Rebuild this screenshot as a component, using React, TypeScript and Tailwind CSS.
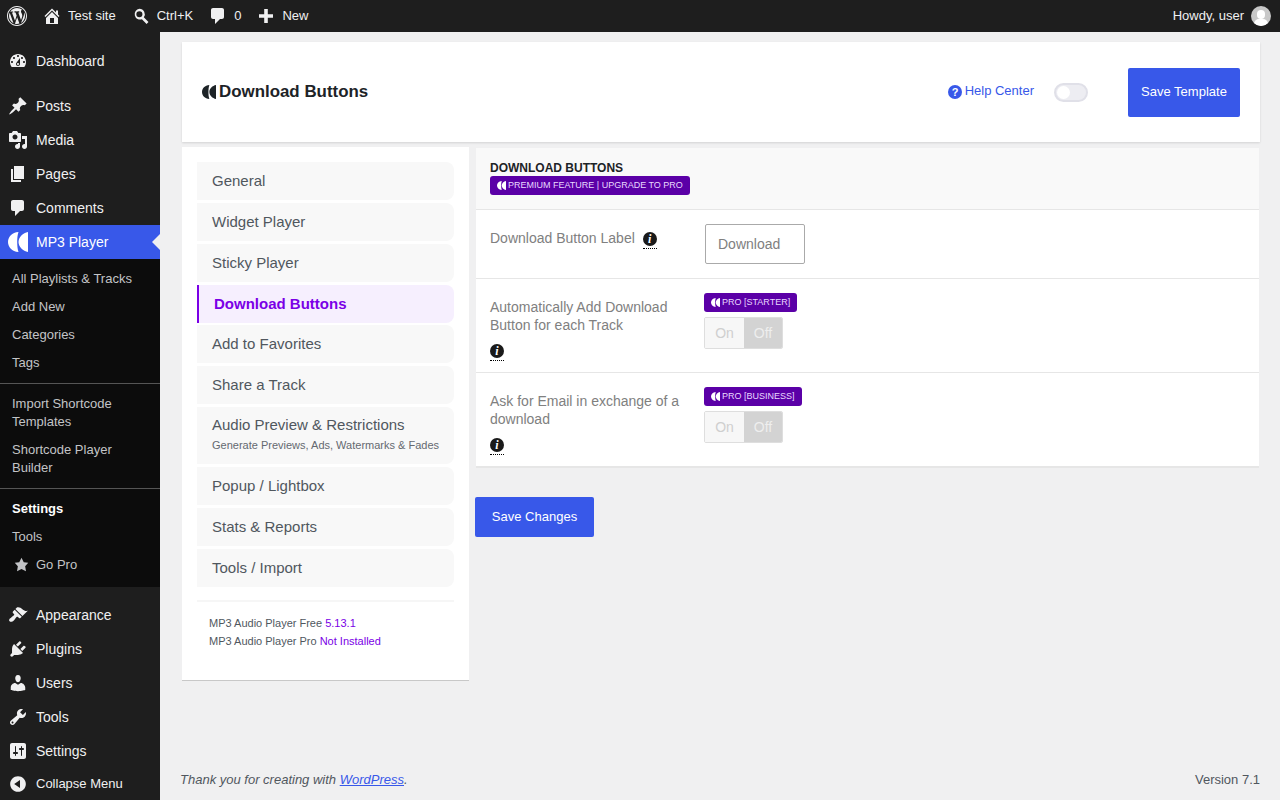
/**
 * MP3 Player settings page inside WP admin
 */
import React from 'react';

const ICONS: Record<string, string> = {
  dashboard:
    'M3.76 16h12.48c1.1-1.37 1.76-3.11 1.76-5 0-4.42-3.58-8-8-8s-8 3.58-8 8c0 1.89.66 3.63 1.76 5zM10 4c.55 0 1 .45 1 1s-.45 1-1 1-1-.45-1-1 .45-1 1-1zM6 6c.55 0 1 .45 1 1s-.45 1-1 1-1-.45-1-1 .45-1 1-1zm8 0c.55 0 1 .45 1 1s-.45 1-1 1-1-.45-1-1 .45-1 1-1zm-5.37 5.55L12 7v6c0 1.1-.9 2-2 2s-2-.9-2-2c0-.57.24-1.08.63-1.45zM4 10c.55 0 1 .45 1 1s-.45 1-1 1-1-.45-1-1 .45-1 1-1zm12 0c.55 0 1 .45 1 1s-.45 1-1 1-1-.45-1-1 .45-1 1-1zm-5 3c0-.55-.45-1-1-1s-1 .45-1 1 .45 1 1 1 1-.45 1-1z',
  posts:
    'M10.44 3.02l1.82-1.82 6.36 6.35-1.83 1.82c-1.05-.68-2.48-.57-3.41.36l-.75.75c-.92.93-1.04 2.35-.35 3.41l-1.83 1.82-2.41-2.41-2.8 2.79c-.42.42-3.38 2.71-3.8 2.29s1.86-3.39 2.28-3.81l2.79-2.79L4.1 9.36l1.83-1.82c1.05.69 2.48.57 3.4-.36l.75-.75c.93-.92 1.05-2.35.36-3.41z',
  media:
    'M13 11V4c0-.55-.45-1-1-1h-1.67L9 1H5L3.67 3H2c-.55 0-1 .45-1 1v7c0 .55.45 1 1 1h10c.55 0 1-.45 1-1zM7 4.5c1.38 0 2.5 1.12 2.5 2.5S8.38 9.5 7 9.5 4.5 8.38 4.5 7 5.62 4.5 7 4.5zM14 6h5v10.5c0 1.38-1.12 2.5-2.5 2.5S14 17.88 14 16.5s1.12-2.5 2.5-2.5c.17 0 .34.02.5.05V9h-3V6zm-4 8.05V13h2v3.5c0 1.38-1.12 2.5-2.5 2.5S7 17.88 7 16.5 8.12 14 9.5 14c.17 0 .34.02.5.05z',
  pages: 'M6 15V2h10v13H6zm-1 1h8v2H3V5h2v11z',
  comments: 'M5 2h9c1.1 0 2 .9 2 2v7c0 1.1-.9 2-2 2h-2l-5 5v-5H5c-1.1 0-2-.9-2-2V4c0-1.1.9-2 2-2z',
  appearance:
    'M14.48 11.06L7.41 3.99l1.5-1.5c.5-.56 2.3-.47 3.51.32 1.21.8 1.43 1.28 2.91 2.1 1.18.64 2.45 1.26 4.45.85zm-.71.71L6.7 4.7 4.93 6.47c-.39.39-.39 1.02 0 1.41l1.06 1.06c.39.39.39 1.03 0 1.42-.6.6-1.43 1.11-2.21 1.69-.35.26-.7.53-1.01.84C1.43 13.23.4 15.11 1.6 16.31c1.2 1.2 3.08.17 4.42-1.17.31-.31.58-.66.84-1.01.58-.78 1.09-1.61 1.69-2.21.39-.39 1.03-.39 1.42 0l1.06 1.06c.39.39 1.02.39 1.41 0z',
  plugins:
    'M13.11 4.36L9.87 7.6 8 5.73l3.24-3.24c.35-.34 1.05-.2 1.56.32.52.51.66 1.21.31 1.55zm-8 1.77l.91-1.12 9.01 9.01-1.19.84c-.71.71-2.63 1.16-3.82 1.16H6.14L4.9 17.26c-.59.59-1.54.59-2.12 0-.59-.58-.59-1.53 0-2.12l1.24-1.24v-3.88c0-1.13.4-3.19 1.09-3.89zm7.26 3.97l3.24-3.24c.34-.35 1.04-.21 1.55.31.52.51.66 1.21.31 1.55l-3.24 3.25z',
  users:
    'M10 9.25c-2.27 0-2.73-3.44-2.73-3.44C7 4.02 7.82 2 9.97 2c2.16 0 2.98 2.02 2.71 3.81 0 0-.41 3.44-2.68 3.44zm0 2.57L12.72 10c2.39 0 4.52 2.33 4.52 4.53v2.49s-3.65 1.13-7.24 1.13c-3.65 0-7.24-1.13-7.24-1.13v-2.49c0-2.25 1.94-4.48 4.47-4.48z',
  tools:
    'M16.68 9.77c-1.34 1.34-3.3 1.67-4.95.99l-5.41 6.52c-.99.99-2.59.99-3.58 0s-.99-2.59 0-3.57l6.52-5.42c-.68-1.65-.35-3.61.99-4.95 1.28-1.28 3.12-1.62 4.72-1.06l-2.89 2.89 2.82 2.82 2.86-2.87c.53 1.58.18 3.39-1.08 4.65zM3.81 16.21c.4.39 1.04.39 1.43 0 .4-.4.4-1.04 0-1.43-.39-.4-1.03-.4-1.43 0-.39.39-.39 1.03 0 1.43z',
  settings:
    'M18 16V4c0-1.1-.9-2-2-2H4c-1.1 0-2 .9-2 2v12c0 1.1.9 2 2 2h12c1.1 0 2-.9 2-2zM8 11h1c.55 0 1 .45 1 1s-.45 1-1 1H8v1.5c0 .28-.22.5-.5.5s-.5-.22-.5-.5V13H6c-.55 0-1-.45-1-1s.45-1 1-1h1V5.5c0-.28.22-.5.5-.5s.5.22.5.5V11zm5-2h-1c-.55 0-1-.45-1-1s.45-1 1-1h1V5.5c0-.28.22-.5.5-.5s.5.22.5.5V7h1c.55 0 1 .45 1 1s-.45 1-1 1h-1v5.5c0 .28-.22.5-.5.5s-.5-.22-.5-.5V9z',
  collapse: 'M10 2.16c4.33 0 7.84 3.51 7.84 7.84s-3.51 7.84-7.84 7.84S2.16 14.33 2.16 10 5.71 2.16 10 2.16zm2 11.72V6.12L6.18 9.97z',
  home: 'M16 8.5l1.53 1.53-1.06 1.06L10 4.62l-6.47 6.47-1.06-1.06L10 2.5l4 4v-2h2v4zm-6-2.46l6 5.99V18H4v-5.97zM12 17v-5H8v5h4z',
  star: 'M10 1l3 6 6 .75-4.12 4.62L16 19l-6-3-6 3 1.13-6.63L1 7.75 7 7z',
  wp: 'M20 10c0-5.52-4.48-10-10-10S0 4.48 0 10s4.48 10 10 10 10-4.48 10-10zM10 1.01c4.97 0 8.99 4.02 8.99 8.99s-4.02 8.99-8.99 8.99S1.01 14.97 1.01 10 5.03 1.01 10 1.01zM8.01 14.82L4.96 6.61c.49-.03 1.05-.08 1.05-.08.43-.05.38-1.01-.06-.99 0 0-1.29.1-2.13.1-.15 0-.33 0-.52-.01 1.44-2.17 3.9-3.6 6.7-3.6 2.09 0 3.99.79 5.41 2.09-.6-.08-1.45.35-1.45 1.42 0 .66.38 1.22.79 1.88.31.54.5 1.22.5 2.21 0 1.34-1.27 4.48-1.27 4.48l-2.71-7.5c.48-.03.75-.16.75-.16.43-.05.38-1.1-.05-1.08 0 0-1.3.11-2.14.11-.78 0-2.11-.11-2.11-.11-.43-.02-.48 1.06-.05 1.08l.84.08 1.12 3.04zm6.02 2.15L16.64 10s.67-1.69.39-3.81c.63 1.14.94 2.42.94 3.81 0 2.96-1.56 5.58-3.94 6.97zM2.68 6.77L6.5 17.25c-2.67-1.3-4.47-4.08-4.47-7.25 0-1.16.2-2.23.65-3.23zm7.45 4.53l2.29 6.25c-.75.27-1.57.42-2.42.42-.72 0-1.41-.11-2.06-.3z',
  search: 'M8.2 2a6 6 0 0 1 4.9 9.5l5.2 5.2-2.1 2.1-5.2-5.2A6 6 0 1 1 8.2 2zm0 2.6a3.4 3.4 0 1 0 0 6.8 3.4 3.4 0 0 0 0-6.8z',
  plus: 'M8.2 3h3.6v5.2H17v3.6h-5.2V17H8.2v-5.2H3V8.2h5.2z',
  logo: 'M10.500 0C4 .5 0 5 0 10s4 9.500 10.500 10C9.500 17 9.200 13.500 9.200 10s.3-7 1.300-10zM20 0c-5 1-9.500 5-9.500 10S15 19 20 20z',
};

const Dashicon = ({ name, className }: { name: string; className: string }) => (
  <svg viewBox="0 0 20 20" className={className} fill="currentColor" aria-hidden="true">
    <path d={ICONS[name]} fillRule={name === 'wp' || name === 'search' ? 'evenodd' : 'nonzero'} />
  </svg>
);

const MenuItem = ({ icon, label }: { icon: string; label: string }) => (
  <div className="flex h-[34px] shrink-0 items-center text-[14px] text-[#f0f0f1]">
    <Dashicon name={icon} className="ml-2 h-5 w-5 text-[#f0f0f1]" />
    <span className="ml-2">{label}</span>
  </div>
);

const SubItem = ({ children, bold }: { children: React.ReactNode; bold?: boolean }) => (
  <div className={`px-3 pb-1 pt-[6px] text-[13px] leading-[18px] ${bold ? 'font-bold text-white' : 'text-[#c3c4c7]'}`}>
    {children}
  </div>
);

const Sidebar = () => (
  <aside className="flex h-[768px] w-40 shrink-0 flex-col bg-[#1e1e1e] pt-3">
    <MenuItem icon="dashboard" label="Dashboard" />
    <div className="h-[11px] shrink-0" />
    <MenuItem icon="posts" label="Posts" />
    <MenuItem icon="media" label="Media" />
    <MenuItem icon="pages" label="Pages" />
    <MenuItem icon="comments" label="Comments" />

    {/* current menu */}
    <div className="relative flex h-[34px] shrink-0 items-center bg-[#3858e9] text-[14px] text-white">
      <Dashicon name="logo" className="ml-2 h-5 w-5" />
      <span className="ml-2">MP3 Player</span>
      <span className="absolute right-0 top-[9px] h-0 w-0 border-y-8 border-r-8 border-y-transparent border-r-[#f0f0f1]" />
    </div>
    <div className="shrink-0 bg-[#0c0c0c] pb-[9px] pt-[5px]">
      <SubItem>All Playlists &amp; Tracks</SubItem>
      <SubItem>Add New</SubItem>
      <SubItem>Categories</SubItem>
      <SubItem>Tags</SubItem>
      <div className="mb-[5px] mt-[7px] h-px bg-[#555]" />
      <SubItem>Import Shortcode Templates</SubItem>
      <SubItem>Shortcode Player Builder</SubItem>
      <div className="mb-[5px] mt-[7px] h-px bg-[#555]" />
      <SubItem bold>Settings</SubItem>
      <SubItem>Tools</SubItem>
      <div className="flex items-center pb-1 pl-[14px] pt-[6px] text-[13px] leading-[18px] text-[#c3c4c7]">
        <Dashicon name="star" className="-mt-[2px] h-[15px] w-[15px] text-[#c3c4c7]" />
        <span className="ml-[7px]">Go Pro</span>
      </div>
    </div>

    <div className="h-[11px] shrink-0" />
    <MenuItem icon="appearance" label="Appearance" />
    <MenuItem icon="plugins" label="Plugins" />
    <MenuItem icon="users" label="Users" />
    <MenuItem icon="tools" label="Tools" />
    <MenuItem icon="settings" label="Settings" />
    <div className="flex h-8 shrink-0 items-center text-[13px] text-[#f0f0f1]">
      <Dashicon name="collapse" className="ml-2 h-5 w-5" />
      <span className="ml-2">Collapse Menu</span>
    </div>
  </aside>
);

const AdminBar = () => (
  <header className="flex h-8 items-center bg-[#1e1e1e] text-[13px] text-[#f0f0f1]">
    <Dashicon name="wp" className="ml-[7px] h-5 w-5" />
    <Dashicon name="home" className="ml-[15px] h-5 w-5" />
    <span className="ml-[6px]">Test site</span>
    <Dashicon name="search" className="ml-[16px] h-[18px] w-[18px]" />
    <span className="ml-[7px]">Ctrl+K</span>
    <Dashicon name="comments" className="ml-[15px] h-5 w-5" />
    <span className="ml-[6px]">0</span>
    <Dashicon name="plus" className="ml-[15px] h-5 w-5" />
    <span className="ml-[6px]">New</span>
    <span className="ml-auto">Howdy, user</span>
    <span className="relative ml-[7px] mr-[9px] h-5 w-5 overflow-hidden rounded-full bg-[#c8c8c8]">
      <span className="absolute left-[6px] top-[4px] h-[9px] w-2 rounded-full bg-white" />
      <span className="absolute left-[3px] top-[13px] h-[10px] w-[14px] rounded-full bg-white" />
    </span>
  </header>
);

const NAV = ['General', 'Widget Player', 'Sticky Player', 'Download Buttons', 'Add to Favorites', 'Share a Track'];
const NAV_AFTER = ['Popup / Lightbox', 'Stats & Reports', 'Tools / Import'];

const NavItem = ({ label }: { label: string }) =>
  label === 'Download Buttons' ? (
    <div className="-mb-px flex h-[38px] items-center rounded-r-lg border-l-2 border-[#7a00e6] bg-[#f6effe] pl-[15px] pt-px text-[15px] font-bold text-[#7a00e6]">
      {label}
    </div>
  ) : (
    <div className="flex h-[38px] items-center rounded-r-lg bg-[#f8f8f8] pl-[15px] text-[15px] text-[#50575e]">{label}</div>
  );

const SettingsNav = () => (
  <nav className="h-[534px] w-[287px] shrink-0 border-b border-[#c8c8c8] bg-white px-[15px] pt-[15px]">
    <div className="flex flex-col gap-[3px]">
      {NAV.map((label) => (
        <NavItem key={label} label={label} />
      ))}
      <div className="h-[57px] rounded-r-lg bg-[#f8f8f8] pl-[15px] pt-[9px] text-[#50575e]">
        <div className="text-[15px] leading-[18px]">Audio Preview &amp; Restrictions</div>
        <div className="mt-[3px] text-[11px] leading-[16px] text-[#646970]">Generate Previews, Ads, Watermarks &amp; Fades</div>
      </div>
      {NAV_AFTER.map((label) => (
        <NavItem key={label} label={label} />
      ))}
    </div>
    <div className="mt-[13px] h-[2px] bg-[#f6f6f6]" />
    <div className="pl-3 pt-3 text-[11px] leading-[18px] text-[#50575e]">
      <div>
        MP3 Audio Player Free <span className="text-[#7a00e6]">5.13.1</span>
      </div>
      <div>
        MP3 Audio Player Pro <span className="text-[#7a00e6]">Not Installed</span>
      </div>
    </div>
  </nav>
);

const ProBadge = ({ label }: { label: string }) => (
  <span className="flex h-[19px] w-fit items-center rounded-[3px] bg-[#5b00a7] px-[7px] text-[9px] text-[#e8d8ff]">
    <Dashicon name="logo" className="mr-[2px] h-[9px] w-[9px] text-white" />
    {label}
  </span>
);

const InfoTip = ({ className }: { className?: string }) => (
  <span className={`inline-block h-[17px] w-[14px] border-b border-dotted border-black ${className ?? ''}`}>
    <span className="flex h-[14px] w-[14px] items-center justify-center rounded-full bg-[#1a1a1a] font-['Liberation_Serif',serif] text-[12px] font-bold italic leading-none text-white">
      i
    </span>
  </span>
);

const OnOff = () => (
  <div className="mt-[5px] flex h-8 w-[79px] overflow-hidden rounded-[2px] border border-[#dedede] text-[14px]">
    <span className="flex w-[39px] items-center justify-center bg-[#f7f7f7] text-[#cfcfcf]">On</span>
    <span className="flex flex-1 items-center justify-center bg-[#d3d3d3] text-[#eeeeee]">Off</span>
  </div>
);

const ProRow = ({ label, badge }: { label: React.ReactNode; badge: string }) => (
  <div className="flex h-[94px] border-t border-[#e6e6e6] pl-[14px] pt-[14px]">
    <div className="w-[214px] pr-5 pt-[5px] text-[14px] leading-[18px] text-[#808080]">
      <div>{label}</div>
      <InfoTip className="mt-[10px] block" />
    </div>
    <div>
      <ProBadge label={badge} />
      <OnOff />
    </div>
  </div>
);

const DownloadPanel = () => (
  <div className="mt-px w-[783px] border-b-2 border-[#e6e6e6] bg-white">
    <div className="h-[61px] bg-[#f9f9f9] pl-[14px] pt-[13px]">
      <div className="text-[12px] font-bold leading-[15px] text-[#1d2327]">DOWNLOAD BUTTONS</div>
      <ProBadge label="PREMIUM FEATURE | UPGRADE TO PRO" />
    </div>
    <div className="flex h-[69px] border-t border-[#e6e6e6] pl-[14px] pt-[14px]">
      <div className="flex w-[215px] items-start pt-[5px] text-[14px] leading-[18px] text-[#808080]">
        Download Button Label
        <InfoTip className="ml-2 mt-[3px]" />
      </div>
      <div className="flex h-10 w-[100px] items-center rounded-[2px] border border-[#aaa] pl-3 text-[14px] text-[#808080]">Download</div>
    </div>
    <ProRow label="Automatically Add Download Button for each Track" badge="PRO [STARTER]" />
    <ProRow label="Ask for Email in exchange of a download" badge="PRO [BUSINESS]" />
  </div>
);

const PageHeader = () => (
  <div className="flex h-[100px] items-center bg-white pl-5 pr-5 shadow-[0_1px_2px_rgba(0,0,0,0.12)]">
    <Dashicon name="logo" className="h-[14px] w-[14px] text-[#1d2327]" />
    <h1 className="ml-[3px] text-[16.9px] font-bold text-[#1d2327]">Download Buttons</h1>
    <svg viewBox="0 0 14 14" className="ml-auto h-[14px] w-[14px]" aria-hidden="true">
      <circle cx="7" cy="7" r="7" fill="#3858e9" />
      <text x="7" y="11" textAnchor="middle" fontSize="11" fontWeight="700" fill="#fff" fontFamily="Liberation Sans, sans-serif">
        ?
      </text>
    </svg>
    <span className="ml-[3px] -mt-[2px] text-[13px] text-[#3858e9]">Help Center</span>
    <span className="relative ml-5 h-[19px] w-[34px] rounded-full border-2 border-[#e0e0e8] bg-[#ededf2]">
      <span className="absolute left-[1px] top-[1px] h-[13px] w-[13px] rounded-full bg-white" />
    </span>
    <button className="ml-10 h-[49px] w-[112px] rounded-[2px] bg-[#3858e9] text-[13px] text-white">Save Template</button>
  </div>
);

const App: React.FC = () => (
  <div className="h-[800px] w-[1280px] overflow-hidden bg-[#f0f0f1] font-['Liberation_Sans',Arial,sans-serif]">
    <AdminBar />
    <div className="flex">
      <Sidebar />
      <main className="flex h-[768px] flex-1 flex-col">
        <div className="flex-1 pl-[22px] pr-5 pt-[10px]">
          <PageHeader />
          <div className="mt-[5px] flex gap-[7px]">
            <SettingsNav />
            <div>
              <DownloadPanel />
              <button className="-ml-px mt-[29px] h-10 w-[119px] rounded-[2px] bg-[#3858e9] text-[13px] text-white">Save Changes</button>
            </div>
          </div>
        </div>
        <footer className="flex h-[42px] items-start justify-between pl-5 pr-5 pt-3 text-[13px] text-[#50575e]">
          <span className="italic">
            Thank you for creating with <span className="text-[#3858e9] underline">WordPress</span>.
          </span>
          <span>Version 7.1</span>
        </footer>
      </main>
    </div>
  </div>
);

export default App;
